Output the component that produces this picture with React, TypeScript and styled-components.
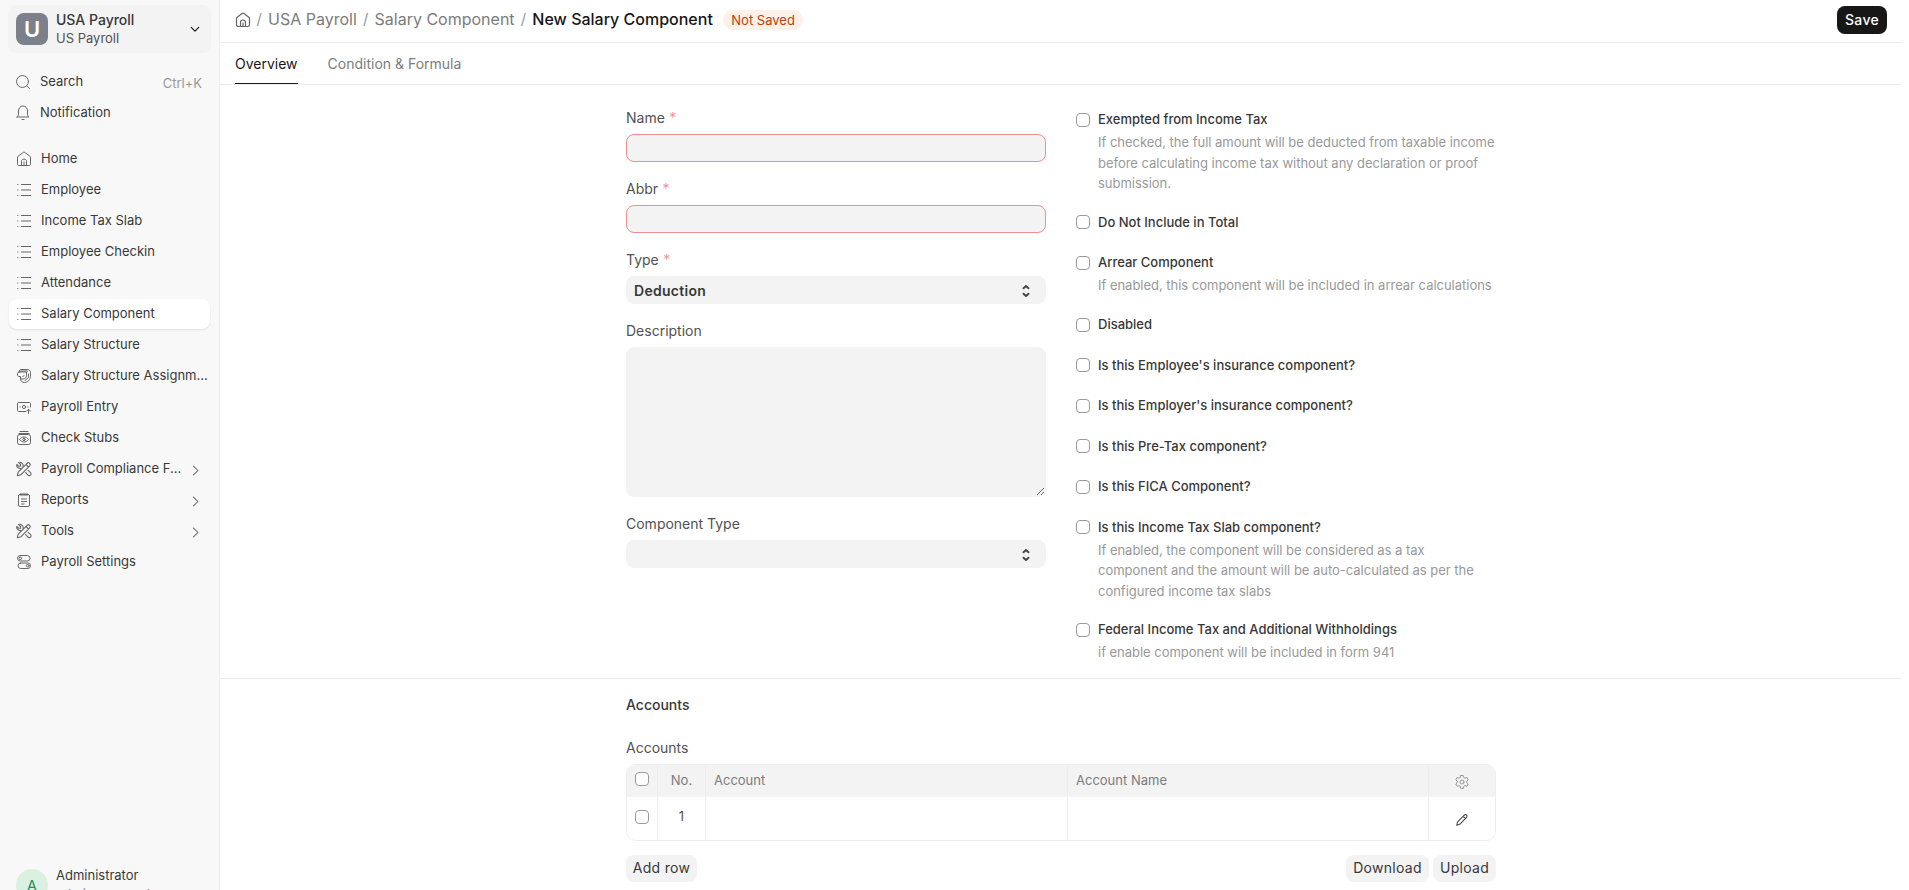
import React from 'react';
import styled, { createGlobalStyle, css } from 'styled-components';

const GlobalStyle = createGlobalStyle`
  *, *::before, *::after { box-sizing: border-box; }
  html, body { margin: 0; padding: 0; background: #fff; overflow: hidden; }
  body {
    font-family: Inter, 'Liberation Sans', sans-serif;
    font-size: 14px;
    font-weight: 400;
    color: #383838;
  }
  input, select, textarea, button { font: inherit; letter-spacing: inherit; color: inherit; margin: 0; }
`;

const Shell = styled.div`
  display: flex;
  height: 890px;
  padding-right: 7px;
  overflow: hidden;
`;

/* ---------- sidebar ---------- */

const Sidebar = styled.aside`
  width: 220px;
  flex: none;
  display: flex;
  flex-direction: column;
  background: #f8f8f8;
  border-right: 1px solid #ededed;
  padding: 5px 8px 0;
`;

const AppSwitcher = styled.div`
  display: flex;
  align-items: center;
  gap: 8px;
  height: 48px;
  padding: 0 10px 0 8px;
  border-radius: 8px;
  background: #f3f3f3;
  margin-bottom: 14px;
  flex: none;
`;

const AppLogo = styled.div`
  width: 32px;
  height: 32px;
  border-radius: 8px;
  background: #7c808a;
  color: #fff;
  display: grid;
  place-items: center;
  font-size: 22px;
  font-weight: 600;
`;

const TwoLine = styled.div`
  flex: 1;
  display: flex;
  flex-direction: column;
  line-height: 19px;
`;

const AppName = styled.span`
  font-size: 14px;
  font-weight: 500;
`;

const SubLine = styled.span`
  font-size: 13px;
  color: #525252;
`;

const Nav = styled.nav`
  display: flex;
  flex-direction: column;
  gap: 1px;
  flex: none;
`;

const NavItem = styled.a<{ $active?: boolean; $inset?: number }>`
  display: flex;
  align-items: center;
  height: 30px;
  margin: 0 1px;
  padding: 0 8px 0 ${(p) => p.$inset ?? 7}px;
  border-radius: 8px;
  font-size: 13px;
  color: #383838;
  white-space: nowrap;
  ${(p) =>
    p.$active &&
    css`
      background: #fff;
      box-shadow: 0 1px 2px rgba(0, 0, 0, 0.1);
    `}
`;

const NavLabel = styled.span`
  flex: 1;
  margin-left: 9px;
  line-height: 18px;
  padding-bottom: 2px;
`;

const Shortcut = styled.span`
  color: #999;
  padding-top: 2px;
`;

const ChevronSlot = styled.span`
  display: flex;
  padding-top: 3px;
`;

const Divider = styled.div`
  height: 16px;
  flex: none;
`;

const UserCard = styled.div`
  display: flex;
  gap: 8px;
  height: 26px;
  margin-top: auto;
  padding-left: 8px;
  flex: none;
`;

const Avatar = styled.div`
  width: 32px;
  height: 32px;
  margin-top: 5px;
  border-radius: 50%;
  background: #daf0e1;
  color: #278f5e;
  display: grid;
  place-items: center;
  font-size: 15px;
  flex: none;
`;

const UserText = styled.div`
  display: flex;
  flex-direction: column;
  padding-top: 2px;
  line-height: 19px;
  font-size: 13px;
`;

const UserMail = styled.span`
  color: #7c7c7c;
`;

/* ---------- main header ---------- */

const Main = styled.main`
  flex: 1;
  display: flex;
  flex-direction: column;
  min-width: 0;
`;

const Navbar = styled.header`
  display: flex;
  align-items: center;
  height: 43px;
  padding: 0 15px 3px 15px;
  border-bottom: 1px solid #ededed;
  flex: none;
`;

const Crumbs = styled.div`
  display: flex;
  align-items: center;
  flex: 1;
  font-size: 16px;
  color: #7c7c7c;
  line-height: 22px;
`;

const Crumb = styled.span<{ $current?: boolean }>`
  margin-top: -1px;
  ${(p) => p.$current && 'color: #171717; font-weight: 500;'}
`;

const Slash = styled.span`
  color: #999;
  margin: -1px 6.2px 0;
  font-size: 15px;
  &:first-of-type { margin-left: 5.4px; }
`;

const StatusPill = styled.span`
  margin-left: 10.5px;
  height: 20px;
  padding: 0 8px;
  border-radius: 10px;
  background: #fff1e7;
  color: #bd3e0c;
  font-size: 13px;
  line-height: 20px;
`;

const SaveButton = styled.button`
  height: 28px;
  width: 50px;
  padding: 0;
  border: 0;
  border-radius: 8px;
  background: #171717;
  color: #fff;
  font-size: 14px;
  font-weight: 500;
  letter-spacing: 0.02em;
`;

const Tabs = styled.div`
  display: flex;
  gap: 30px;
  height: 42px;
  padding: 0 15px;
  border-bottom: 1px solid #ededed;
  flex: none;
`;

const Tab = styled.div<{ $active?: boolean }>`
  display: flex;
  align-items: center;
  height: 41px;
  color: ${(p) => (p.$active ? '#171717' : '#7c7c7c')};
  border-bottom: 1px solid ${(p) => (p.$active ? '#171717' : 'transparent')};
`;

/* ---------- form ---------- */

const Section = styled.section<{ $height?: number; $top: number }>`
  ${(p) => p.$height && `height: ${p.$height}px; border-bottom: 1px solid #ededed;`}
  padding: ${(p) => p.$top}px 406px 0;
  flex: none;
`;

const Columns = styled.div`
  display: grid;
  grid-template-columns: 420px 420px;
  gap: 30px;
`;

const FieldColumn = styled.div`
  display: flex;
  flex-direction: column;
  gap: 17px;
  padding-top: 2px;
`;

const Field = styled.label`
  display: flex;
  flex-direction: column;
`;

const FieldLabel = styled.span`
  height: 26px;
  line-height: 20px;
  color: #525252;
`;

const Required = styled.span`
  color: #f19494;
  margin-left: 4.5px;
`;

const control = css`
  background: #f3f3f3;
  border: 1px solid #f3f3f3;
  border-radius: 8px;
  outline: none;
  width: 100%;
`;

const TextInput = styled.input`
  ${control}
  height: 28px;
  border-color: #ee8f8f;
`;

const SelectBox = styled.div`
  ${control}
  height: 28px;
  display: flex;
  align-items: center;
  justify-content: space-between;
  padding: 1px 15px 0 7px;
  font-weight: 600;
  letter-spacing: 0.02em;
`;

const TextArea = styled.textarea`
  ${control}
  display: block;
  height: 150px;
  resize: vertical;
`;

const CheckColumn = styled.div`
  display: flex;
  flex-direction: column;
  padding-top: 3.2px;
`;

const CheckItem = styled.label`
  display: grid;
  grid-template-columns: 14px 1fr;
  column-gap: 8px;
  align-items: center;
  padding-bottom: 19.6px;
  font-size: 13px;
`;

const Checkbox = styled.input.attrs({ type: 'checkbox' })`
  appearance: none;
  width: 14px;
  height: 14px;
  border: 1px solid #999;
  border-radius: 4px;
  background: #fff;
`;

const CheckText = styled.span`
  line-height: 21px;
  font-weight: 500;
`;

const Help = styled.span`
  grid-column: 2;
  line-height: 20.4px;
  letter-spacing: -0.02px;
  color: #999;
  padding-top: 2px;
  margin-bottom: -1.3px;
`;

const HelpLine = styled.span`
  display: block;
  white-space: nowrap;
`;

/* ---------- accounts grid ---------- */

const SectionTitle = styled.h3`
  margin: 0 0 23px;
  font-size: 14px;
  font-weight: 500;
  line-height: 20px;
`;

const GridTable = styled.div`
  border: 1px solid #ededed;
  border-radius: 10px;
  overflow: hidden;
  width: 870px;
`;

const GridRow = styled.div<{ $head?: boolean }>`
  display: grid;
  grid-template-columns: 31px 48px 362px 361px 1fr;
  height: ${(p) => (p.$head ? 32 : 43)}px;
  background: ${(p) => (p.$head ? '#f3f3f3' : '#fff')};
  color: ${(p) => (p.$head ? '#7c7c7c' : '#525252')};
  font-size: 13px;
`;

const Cell = styled.div<{ $center?: boolean; $lift?: number }>`
  display: flex;
  align-items: center;
  justify-content: ${(p) => (p.$center ? 'center' : 'flex-start')};
  padding: 0 8px ${(p) => p.$lift ?? 2}px;
  border-right: 1px solid #ededed;
  &:last-child { border-right: 0; }
`;

const IconCell = styled(Cell)`
  justify-content: center;
  padding-top: 3px;
`;

const Actions = styled.div`
  display: flex;
  gap: 4px;
  margin-top: 14px;
  width: 870px;
`;

const GridButton = styled.button<{ $width: number; $push?: boolean }>`
  height: 27px;
  width: ${(p) => p.$width}px;
  padding: 0 0 2px;
  border: 0;
  border-radius: 8px;
  background: #f3f3f3;
  font-size: 14px;
  letter-spacing: 0.02em;
  ${(p) => p.$push && 'margin-left: auto;'}
`;

/* ---------- icons ---------- */

const Svg = styled.svg`
  fill: none;
  stroke: currentColor;
  stroke-linecap: round;
  stroke-linejoin: round;
  flex: none;
`;

type IconProps = { size?: number; color?: string; width?: number; children: React.ReactNode };
const Icon = ({ size = 16, color = '#666', width = 1, children }: IconProps) => (
  <Svg width={size} height={size} viewBox="0 0 16 16" color={color} strokeWidth={width}>
    {children}
  </Svg>
);

const HomeIcon = ({ width = 1 }: { width?: number }) => (
  <Icon width={width}>
    <path d="M1.5 6.6c0-.6.3-1.1.7-1.4L7 1.6c.6-.5 1.4-.5 2 0l4.8 3.6c.4.3.7.8.7 1.4v6.2c0 1-.7 1.7-1.7 1.7H3.2c-1 0-1.7-.7-1.7-1.7z" />
    <path d="M5.5 14.5v-4.2C5.5 9 6.6 8 8 8s2.5 1 2.5 2.3v4.2M8 11v3.5" />
  </Icon>
);

const ListIcon = () => (
  <Icon>
    <path d="M5 2.5h10M5 8h10M5 13.5h10" strokeLinecap="butt" />
    <path d="M1 2.5h1.5M1 8h1.5M1 13.5h1.5" strokeLinecap="butt" opacity=".7" />
  </Icon>
);

const SearchIcon = () => (
  <Icon>
    <circle cx="7.5" cy="7.5" r="6" />
    <path d="M11.8 11.8l2.7 2.7" />
  </Icon>
);

const BellIcon = () => (
  <Icon>
    <path d="M2 12h12c-1-.8-1.5-1.8-1.5-3V6C12.5 3.2 10.5 1 8 1S3.5 3.2 3.5 6v3c0 1.2-.5 2.2-1.5 3zM7 14.500h2" />
  </Icon>
);

const CardsIcon = () => (
  <Icon>
    <path d="M3.5 4V3c0-1 .7-1.5 1.5-1.5h6.5c1.6 0 3 1.2 3 3v3.8c0 2.6-2.6 6.2-6 6.2-2.5 0-4-1.7-4-3.5" />
    <path d="M3 4h7.5v3.5C10.5 9.5 9 11 7 11H4.5V8.5H3c-1 0-1.5-.7-1.5-1.5V5.5C1.5 4.6 2.1 4 3 4zM3.5 3h8M8 7.5L6.5 9M12.5 6v3.500L9 12.5" />
  </Icon>
);

const BanknoteUpIcon = () => (
  <Icon>
    <path d="M9.5 12.5h-7c-.6 0-1-.4-1-1v-7c0-.6.4-1 1-1h11c.6 0 1 .4 1 1v3.5" />
    <circle cx="8" cy="8" r="1.6" />
    <path d="M4 8h.3M11.7 8h.3M12.5 14.5V10.5M10.5 12.2l2-2 2 2" />
  </Icon>
);

const StubIcon = () => (
  <Icon>
    <path d="M3 3.5h10M4 1.5h8" />
    <rect x="1.5" y="4.5" width="13" height="10" rx="2" />
    <path d="M3.5 9.5C4.5 8 6.2 7 8 7s3.5 1 4.5 2.5C11.5 11 9.8 12 8 12s-3.500-1-4.500-2.500z" />
    <circle cx="8" cy="9.5" r="1.2" />
  </Icon>
);

const ToolsIcon = () => (
  <Icon width={1.1}>
    <path d="M1.3 14.7l.9-3.5 8.9-8.9c.7-.7 1.7-.7 2.4 0l.2.2c.7.7.7 1.7 0 2.4l-8.9 8.9zM10 3.500L12.5 6" />
    <path d="M7 5.800c.4-1.300.1-2.600-.8-3.500S3.700 1 2.500 1.400l2.100 2.100v1.800H2.800L.9 3.300c-.4 1.200 0 2.500.9 3.400.8.800 1.900 1.100 3 .9M9.700 11.700l2 2.200c.8.900 2 1 2.800.2s.7-2-.2-2.800L12.100 9.400" />
  </Icon>
);

const ReportIcon = () => (
  <Icon>
    <rect x="2.5" y="2.5" width="11" height="12" rx="1.5" />
    <path d="M5 1.3v2.4M7 1.3v2.4M9 1.3v2.4M11 1.3v2.4M5.5 7h5M5.5 9.5h5M5.5 12H8" />
  </Icon>
);

const TogglesIcon = () => (
  <Icon>
    <rect x="1.5" y="1.5" width="12.5" height="5.5" rx="2.7" />
    <rect x="2" y="9" width="12.5" height="5.5" rx="2.7" />
    <circle cx="4.3" cy="4.3" r="1.3" />
    <circle cx="11.7" cy="11.7" r="1.3" />
  </Icon>
);

const ChevronRight = () => (
  <Icon size={13} width={1.3}>
    <path d="M5.5 2.5L11 8l-5.5 5.5" />
  </Icon>
);

const ChevronDown = () => (
  <Icon size={12} color="#171717" width={1.6}>
    <path d="M3 5.8l5 5 5-5" />
  </Icon>
);

const SelectArrows = () => (
  <Svg width="8" height="14" viewBox="0 0 8 14" color="#444" strokeWidth="2">
    <path d="M1.5 4.2L4 2l2.5 2.2M1.5 9.8L4 12l2.5-2.2" />
  </Svg>
);

const GearIcon = () => (
  <Icon color="#999">
    <path d="M6.7 1.5h2.6l.4 1.9 1.3.8 1.9-.7 1.3 2.3-1.4 1.3v1.6l1.4 1.3-1.3 2.3-1.9-.7-1.3.8-.4 1.9H6.7l-.4-1.9-1.3-.8-1.9.7L1.8 10l1.4-1.3V7.1L1.8 5.8l1.3-2.3 1.9.7 1.3-.8z" />
    <circle cx="8" cy="8" r="2" />
  </Icon>
);

const PencilIcon = () => (
  <Icon size={14} color="#444" width={1.2}>
    <path d="M2 14l.8-3.7L10.6 2.5c.8-.8 1.9-.8 2.6-.1s.7 1.8-.1 2.6L5.4 12.9zM9.3 3.9l2.6 2.6" />
  </Icon>
);

/* ---------- data ---------- */

type NavEntry = { label: string; icon: React.ReactNode; active?: boolean; group?: boolean };
const navEntries: NavEntry[] = [
  { label: 'Home', icon: <HomeIcon /> },
  { label: 'Employee', icon: <ListIcon /> },
  { label: 'Income Tax Slab', icon: <ListIcon /> },
  { label: 'Employee Checkin', icon: <ListIcon /> },
  { label: 'Attendance', icon: <ListIcon /> },
  { label: 'Salary Component', icon: <ListIcon />, active: true },
  { label: 'Salary Structure', icon: <ListIcon /> },
  { label: 'Salary Structure Assignm...', icon: <CardsIcon /> },
  { label: 'Payroll Entry', icon: <BanknoteUpIcon /> },
  { label: 'Check Stubs', icon: <StubIcon /> },
  { label: 'Payroll Compliance F...', icon: <ToolsIcon />, group: true },
  { label: 'Reports', icon: <ReportIcon />, group: true },
  { label: 'Tools', icon: <ToolsIcon />, group: true },
  { label: 'Payroll Settings', icon: <TogglesIcon /> },
];

const checks: { label: string; help?: string[] }[] = [
  {
    label: 'Exempted from Income Tax',
    help: [
      'If checked, the full amount will be deducted from taxable income',
      'before calculating income tax without any declaration or proof',
      'submission.',
    ],
  },
  { label: 'Do Not Include in Total' },
  { label: 'Arrear Component', help: ['If enabled, this component will be included in arrear calculations'] },
  { label: 'Disabled' },
  { label: "Is this Employee's insurance component?" },
  { label: "Is this Employer's insurance component?" },
  { label: 'Is this Pre-Tax component?' },
  { label: 'Is this FICA Component?' },
  {
    label: 'Is this Income Tax Slab component?',
    help: [
      'If enabled, the component will be considered as a tax',
      'component and the amount will be auto-calculated as per the',
      'configured income tax slabs',
    ],
  },
  {
    label: 'Federal Income Tax and Additional Withholdings',
    help: ['if enable component will be included in form 941'],
  },
];

export default function App() {
  return (
    <>
      <GlobalStyle />
      <Shell>
        <Sidebar>
          <AppSwitcher>
            <AppLogo>U</AppLogo>
            <TwoLine>
              <AppName>USA Payroll</AppName>
              <SubLine>US Payroll</SubLine>
            </TwoLine>
            <ChevronDown />
          </AppSwitcher>
          <Nav>
            <NavItem $inset={6}>
              <SearchIcon />
              <NavLabel>Search</NavLabel>
              <Shortcut>Ctrl+K</Shortcut>
            </NavItem>
            <NavItem $inset={6}>
              <BellIcon />
              <NavLabel>Notification</NavLabel>
            </NavItem>
          </Nav>
          <Divider />
          <Nav>
            {navEntries.map((e) => (
              <NavItem key={e.label} $active={e.active}>
                {e.icon}
                <NavLabel>{e.label}</NavLabel>
                {e.group && (
                  <ChevronSlot>
                    <ChevronRight />
                  </ChevronSlot>
                )}
              </NavItem>
            ))}
          </Nav>
          <UserCard>
            <Avatar>A</Avatar>
            <UserText>
              <span>Administrator</span>
              <UserMail>admin@example.com</UserMail>
            </UserText>
          </UserCard>
        </Sidebar>

        <Main>
          <Navbar>
            <Crumbs>
              <HomeIcon width={1.2} />
              <Slash>/</Slash>
              <Crumb>USA Payroll</Crumb>
              <Slash>/</Slash>
              <Crumb>Salary Component</Crumb>
              <Slash>/</Slash>
              <Crumb $current>New Salary Component</Crumb>
              <StatusPill>Not Saved</StatusPill>
            </Crumbs>
            <SaveButton>Save</SaveButton>
          </Navbar>
          <Tabs>
            <Tab $active>Overview</Tab>
            <Tab>Condition &amp; Formula</Tab>
          </Tabs>

          <Section $height={594} $top={21}>
            <Columns>
              <FieldColumn>
                <Field>
                  <FieldLabel>Name<Required>*</Required></FieldLabel>
                  <TextInput />
                </Field>
                <Field>
                  <FieldLabel>Abbr<Required>*</Required></FieldLabel>
                  <TextInput />
                </Field>
                <Field>
                  <FieldLabel>Type<Required>*</Required></FieldLabel>
                  <SelectBox>
                    <span>Deduction</span>
                    <SelectArrows />
                  </SelectBox>
                </Field>
                <Field>
                  <FieldLabel>Description</FieldLabel>
                  <TextArea />
                </Field>
                <Field>
                  <FieldLabel>Component Type</FieldLabel>
                  <SelectBox>
                    <span />
                    <SelectArrows />
                  </SelectBox>
                </Field>
              </FieldColumn>
              <CheckColumn>
                {checks.map((c) => (
                  <CheckItem key={c.label}>
                    <Checkbox />
                    <CheckText>{c.label}</CheckText>
                    {c.help && (
                      <Help>
                        {c.help.map((line) => (
                          <HelpLine key={line}>{line}</HelpLine>
                        ))}
                      </Help>
                    )}
                  </CheckItem>
                ))}
              </CheckColumn>
            </Columns>
          </Section>

          <Section $top={16}>
            <SectionTitle>Accounts</SectionTitle>
            <FieldLabel as="div">Accounts</FieldLabel>
            <GridTable>
              <GridRow $head>
                <Cell $center $lift={4}><Checkbox /></Cell>
                <Cell $center>No.</Cell>
                <Cell>Account</Cell>
                <Cell>Account Name</Cell>
                <IconCell $lift={1}><GearIcon /></IconCell>
              </GridRow>
              <GridRow>
                <Cell $center $lift={3}><Checkbox /></Cell>
                <Cell $center $lift={5}>1</Cell>
                <Cell />
                <Cell />
                <IconCell $lift={0}><PencilIcon /></IconCell>
              </GridRow>
            </GridTable>
            <Actions>
              <GridButton $width={71}>Add row</GridButton>
              <GridButton $width={83} $push>Download</GridButton>
              <GridButton $width={63}>Upload</GridButton>
            </Actions>
          </Section>
        </Main>
      </Shell>
    </>
  );
}
